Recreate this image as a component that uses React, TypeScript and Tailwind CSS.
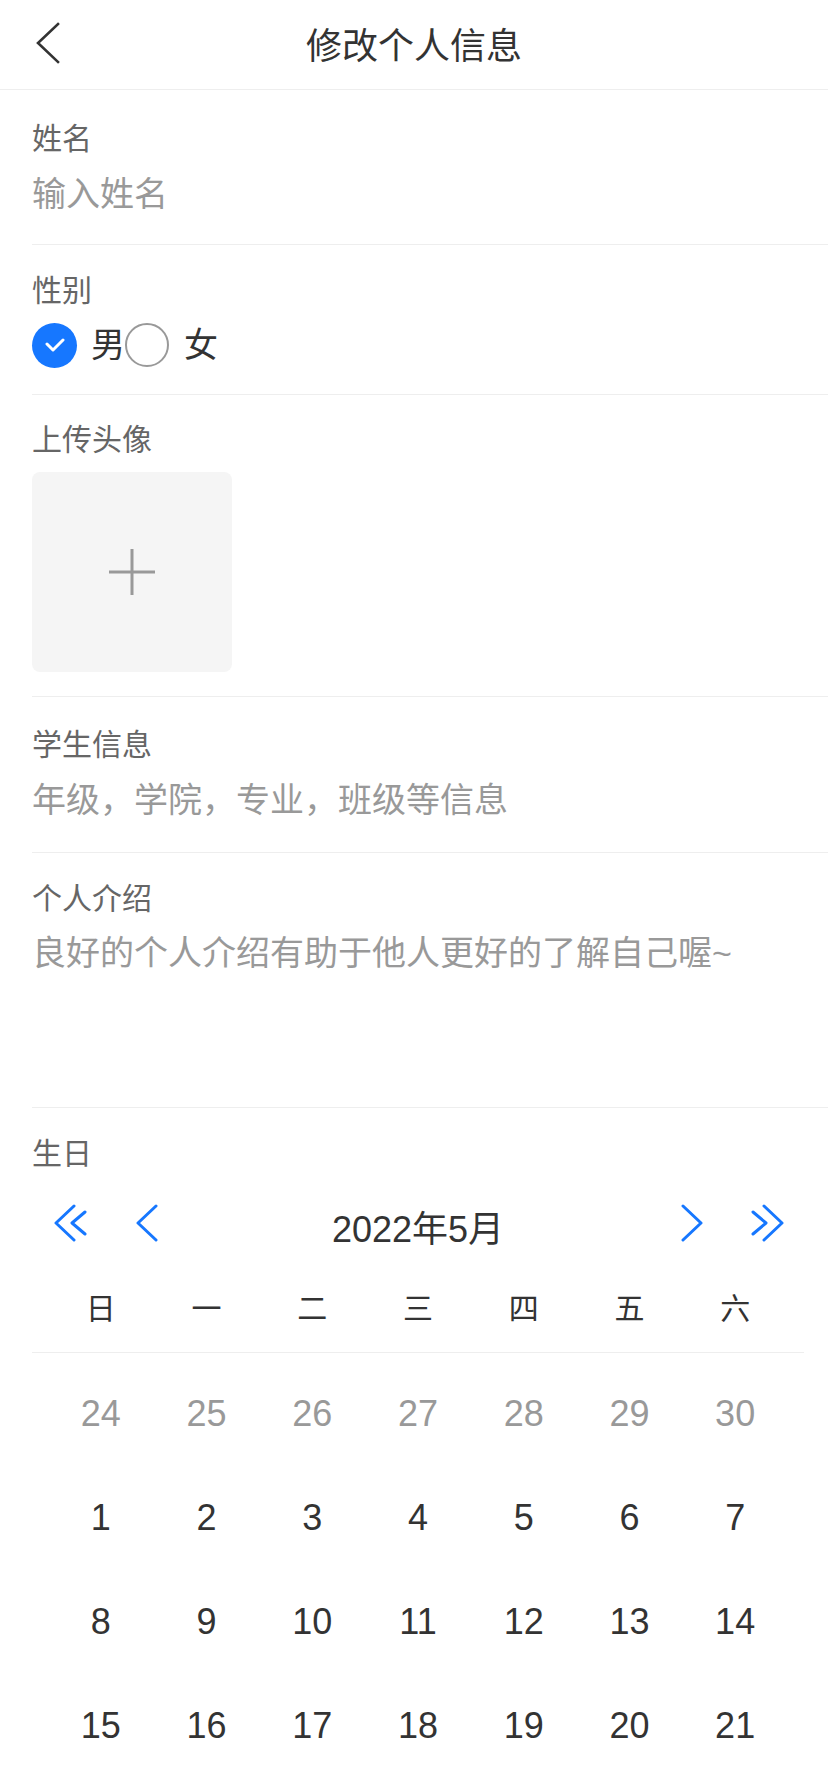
import { useState } from 'react';

const weekDays = ['日', '一', '二', '三', '四', '五', '六'];

// April 24 -> June 4 (six rows)
const buildDays = () => {
  const days: { day: number; current: boolean }[] = [];
  for (let d = 24; d <= 30; d++) days.push({ day: d, current: false });
  for (let d = 1; d <= 31; d++) days.push({ day: d, current: true });
  for (let d = 1; d <= 4; d++) days.push({ day: d, current: false });
  return days;
};

function Chevron({ dir, double }: { dir: 'left' | 'right'; double?: boolean }) {
  if (double && dir === 'left') {
    return (
      <svg width="34" height="38" viewBox="0 0 34 38" fill="none" stroke="#1677ff" strokeWidth="3" strokeLinecap="round" strokeLinejoin="round">
        <path d="M21 2 L3 19 L21 36" />
        <path d="M32 8 L19 19 L32 30" />
      </svg>
    );
  }
  if (double && dir === 'right') {
    return (
      <svg width="34" height="38" viewBox="0 0 34 38" fill="none" stroke="#1677ff" strokeWidth="3" strokeLinecap="round" strokeLinejoin="round">
        <path d="M13 2 L31 19 L13 36" />
        <path d="M2 8 L15 19 L2 30" />
      </svg>
    );
  }
  return (
    <svg width="24" height="38" viewBox="0 0 24 38" fill="none" stroke="#1677ff" strokeWidth="3" strokeLinecap="round" strokeLinejoin="round">
      {dir === 'left' ? <path d="M21 2 L3 19 L21 36" /> : <path d="M3 2 L21 19 L3 36" />}
    </svg>
  );
}

export default function App() {
  const [gender, setGender] = useState<'male' | 'female'>('male');
  const days = buildDays();

  return (
    <div className="min-h-screen bg-white font-['Liberation_Sans','Noto_Sans_CJK_SC',sans-serif] text-[#333]">
      {/* Nav bar */}
      <header className="relative flex h-[90px] items-center justify-center border-b border-[#eee] pt-[4px]">
        <button className="absolute left-[34px] top-[21px]">
          <svg width="28" height="44" viewBox="0 0 28 44" fill="none" stroke="#333" strokeWidth="2.6" strokeLinecap="square">
            <path d="M24 3 L4 22 L24 41" />
          </svg>
        </button>
        <h1 className="text-[36px] leading-[44px] text-[#333]">修改个人信息</h1>
      </header>

      <div className="pl-[32px]">
        {/* Name */}
        <div className="border-b border-[#eee] pt-[28px] pb-[26px]">
          <div className="h-[42px] text-[30px] leading-[42px] text-[#666]">姓名</div>
          <input
            className="mt-[10px] block h-[48px] w-full bg-transparent text-[34px] leading-[48px] text-[#333] outline-none placeholder:text-[#999]"
            placeholder="输入姓名"
          />
        </div>

        {/* Gender */}
        <div className="border-b border-[#eee] pt-[25px] pb-[26px]">
          <div className="h-[42px] text-[30px] leading-[42px] text-[#666]">性别</div>
          <div className="mt-[10px] flex h-[46px] items-center">
            <button className="flex items-center" onClick={() => setGender('male')}>
              {gender === 'male' ? (
                <span className="flex h-[45px] w-[45px] items-center justify-center rounded-full bg-[#1677ff]">
                  <svg width="20" height="14" viewBox="0 0 20 14" fill="none" stroke="white" strokeWidth="3" strokeLinecap="round" strokeLinejoin="round">
                    <path d="M2 6 L8 12 L18 2" />
                  </svg>
                </span>
              ) : (
                <span className="h-[44px] w-[44px] rounded-full border-2 border-[#999]" />
              )}
              <span className="ml-[14px] text-[34px] leading-[46px] text-[#333]">男</span>
            </button>
            <button className="flex items-center" onClick={() => setGender('female')}>
              {gender === 'female' ? (
                <span className="flex h-[45px] w-[45px] items-center justify-center rounded-full bg-[#1677ff]">
                  <svg width="20" height="14" viewBox="0 0 20 14" fill="none" stroke="white" strokeWidth="3" strokeLinecap="round" strokeLinejoin="round">
                    <path d="M2 6 L8 12 L18 2" />
                  </svg>
                </span>
              ) : (
                <span className="h-[44px] w-[44px] rounded-full border-2 border-[#999]" />
              )}
              <span className="ml-[15px] text-[34px] leading-[46px] text-[#333]">女</span>
            </button>
          </div>
        </div>

        {/* Avatar */}
        <div className="border-b border-[#eee] pt-[24px] pb-[24px]">
          <div className="h-[42px] text-[30px] leading-[42px] text-[#666]">上传头像</div>
          <div className="mt-[11px] flex h-[200px] w-[200px] items-center justify-center rounded-[8px] bg-[#f5f5f5]">
            <svg width="48" height="48" viewBox="0 0 48 48" fill="none" stroke="#999" strokeWidth="3">
              <path d="M24 1 V47 M1 24 H47" />
            </svg>
          </div>
        </div>

        {/* Student info */}
        <div className="border-b border-[#eee] pt-[27px] pb-[28px]">
          <div className="h-[42px] text-[30px] leading-[42px] text-[#666]">学生信息</div>
          <input
            className="mt-[10px] block h-[48px] w-full bg-transparent text-[34px] leading-[48px] text-[#333] outline-none placeholder:text-[#999]"
            placeholder="年级，学院，专业，班级等信息"
          />
        </div>

        {/* Intro */}
        <div className="border-b border-[#eee] pt-[25px] pb-[26px]">
          <div className="h-[42px] text-[30px] leading-[42px] text-[#666]">个人介绍</div>
          <textarea
            className="mt-[9px] block h-[152px] w-full resize-none bg-transparent p-0 text-[34px] leading-[48px] text-[#333] outline-none placeholder:text-[#999]"
            placeholder="良好的个人介绍有助于他人更好的了解自己喔~"
          />
        </div>

        {/* Birthday */}
        <div className="pt-[25px] pr-[24px] pb-[24px]">
          <div className="h-[42px] text-[30px] leading-[42px] text-[#666]">生日</div>

          <div className="mt-[18px] flex h-[60px] items-center">
            <div className="flex w-[200px] items-center">
              <button className="ml-[21px]"><Chevron dir="left" double /></button>
              <button className="ml-[48px]"><Chevron dir="left" /></button>
            </div>
            <div className="flex-1 pt-[14px] text-center text-[36px] leading-[44px] text-[#333]">2022年5月</div>
            <div className="flex w-[200px] items-center justify-end">
              <button><Chevron dir="right" /></button>
              <button className="ml-[47px] mr-[19px]"><Chevron dir="right" double /></button>
            </div>
          </div>

          <div className="mt-[25px] border-b border-[#eee] px-[16px] pb-[14px]">
            <div className="grid h-[60px] grid-cols-7 items-center">
              {weekDays.map((w) => (
                <div key={w} className="text-center text-[30px] text-[#333]">{w}</div>
              ))}
            </div>
          </div>

          <div className="grid grid-cols-7 px-[16px] pt-[9px]">
            {days.map((d, i) => (
              <div
                key={i}
                className={`flex h-[104px] items-center justify-center text-[36px] ${d.current ? 'text-[#333]' : 'text-[#999]'}`}
              >
                {d.day}
              </div>
            ))}
          </div>
        </div>
      </div>
    </div>
  );
}
